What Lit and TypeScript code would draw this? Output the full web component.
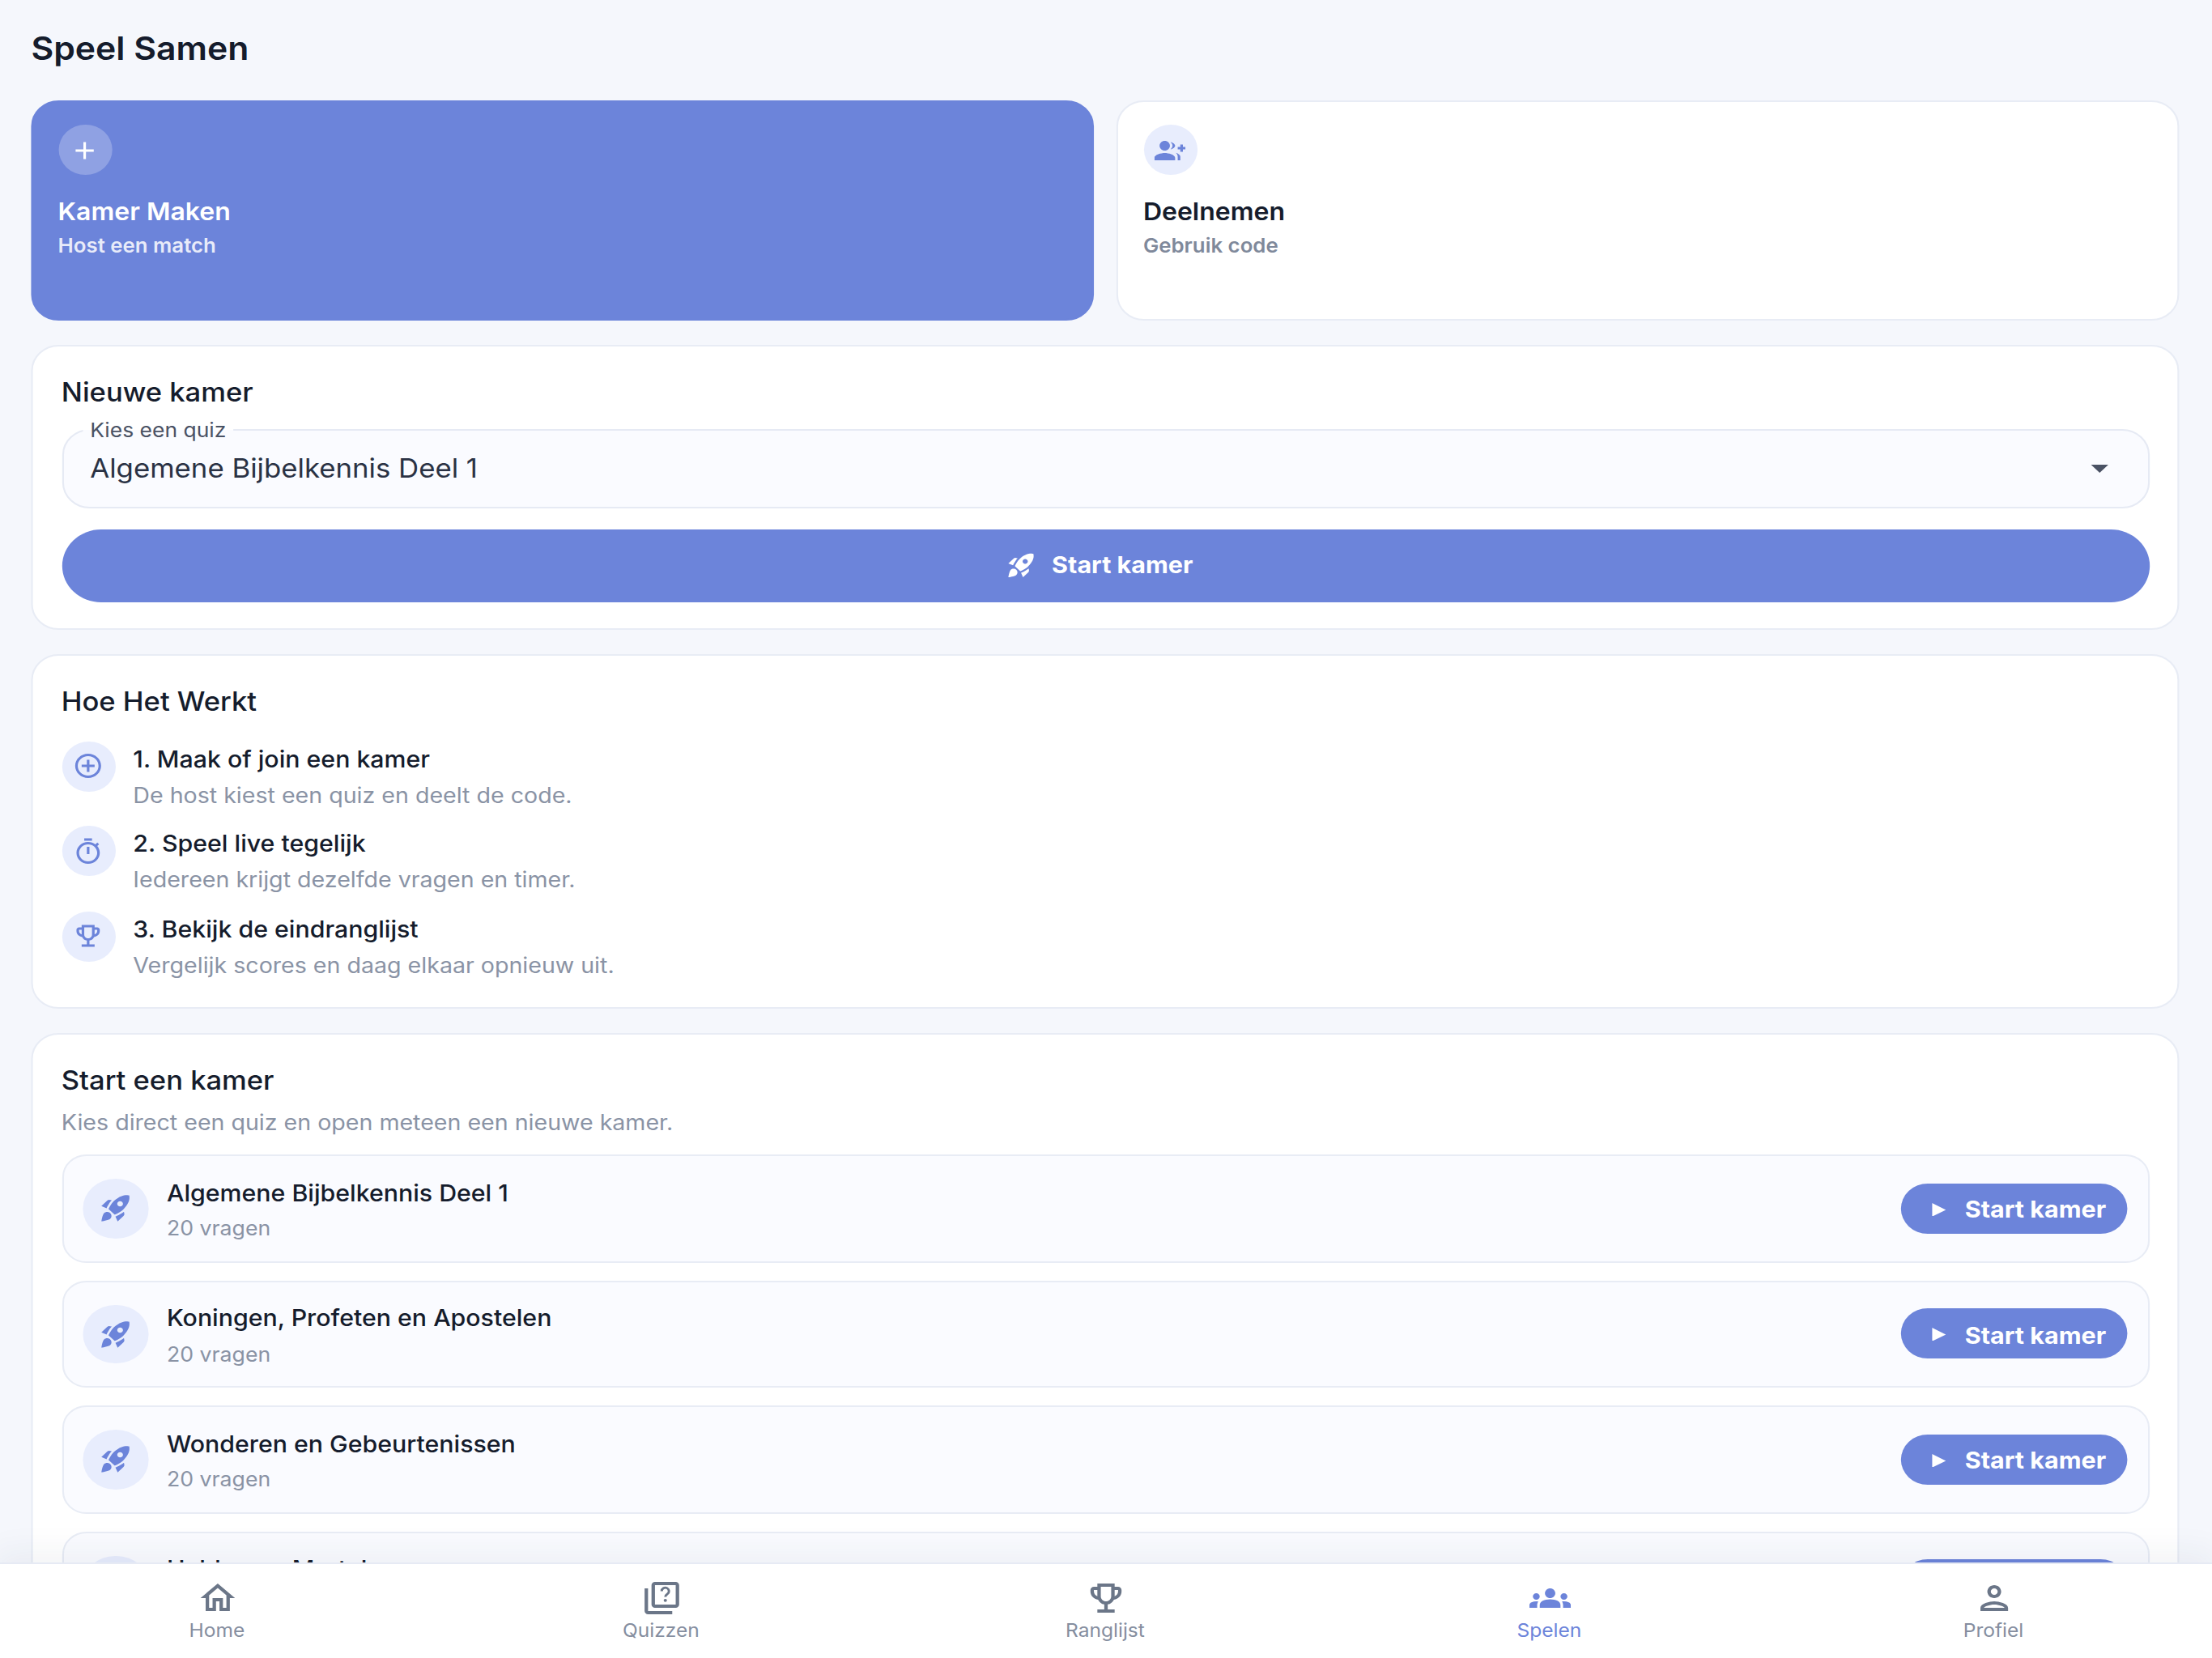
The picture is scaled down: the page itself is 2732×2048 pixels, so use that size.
import { LitElement, html, css, svg } from "lit";
import { customElement } from "lit/decorators.js";

const P = {
  add: "M19 13h-6v6h-2v-6H5v-2h6V5h2v6h6v2z",
  join: "M22 9V7h-2v2h-2v2h2v2h2v-2h2V9h-2zM8 12c2.21 0 4-1.79 4-4s-1.79-4-4-4-4 1.79-4 4 1.79 4 4 4zm0 2c-2.67 0-8 1.34-8 4v2h16v-2c0-2.66-5.33-4-8-4zm4.51-8.95C13.43 6.11 14 7 14 8s-.57 1.89-1.49 2.95C14.47 10.7 16 9.04 16 8s-1.53-2.7-3.49-2.95zM16.53 13.83c.89.83 1.47 1.87 1.47 3.17v3h2v-3c0-1.45-1.59-2.51-3.47-3.17z",
  rocket: "M9.19 6.35c-2.04 2.29-3.44 5.58-3.57 5.89L2 10.69l4.05-4.05c.47-.47 1.15-.68 1.81-.55l1.33.26zM11.17 17s3.74-1.55 5.89-3.7c5.4-5.4 4.5-9.62 4.21-10.57-.95-.3-5.17-1.19-10.57 4.21C8.55 9.09 7 12.83 7 12.83L11.17 17zm6.48-2.19c-2.29 2.04-5.58 3.44-5.89 3.57L13.31 22l4.05-4.05c.47-.47.68-1.15.55-1.81l-.26-1.33zM9 18c0 .83-.34 1.58-.88 2.12C6.94 21.3 2 22 2 22s.7-4.94 1.88-6.12C4.42 15.34 5.17 15 6 15c1.66 0 3 1.34 3 3zm4-9c0-1.1.9-2 2-2s2 .9 2 2-.9 2-2 2-2-.9-2-2z",
  addCircle: "M13 7h-2v4H7v2h4v4h2v-4h4v-2h-4V7zm-1-5C6.48 2 2 6.48 2 12s4.48 10 10 10 10-4.48 10-10S17.52 2 12 2zm0 18c-4.41 0-8-3.59-8-8s3.59-8 8-8 8 3.59 8 8-3.59 8-8 8z",
  timer: "M15 1H9v2h6V1zm-4 13h2V8h-2v6zm8.03-6.61l1.42-1.42c-.43-.51-.9-.99-1.41-1.41l-1.42 1.42C16.07 4.74 14.12 4 12 4c-4.97 0-9 4.03-9 9s4.02 9 9 9 9-4.03 9-9c0-2.12-.74-4.07-1.97-5.61zM12 20c-3.87 0-7-3.13-7-7s3.13-7 7-7 7 3.13 7 7-3.13 7-7 7z",
  trophy: "M19 5h-2V3H7v2H5c-1.1 0-2 .9-2 2v1c0 2.55 1.92 4.63 4.39 4.94.63 1.5 1.98 2.63 3.61 2.96V19H7v2h10v-2h-4v-3.1c1.63-.33 2.98-1.46 3.61-2.96C19.08 12.63 21 10.55 21 8V7c0-1.1-.9-2-2-2zM5 8V7h2v3.82C5.84 10.4 5 9.3 5 8zm7 6c-1.65 0-3-1.35-3-3V5h6v6c0 1.65-1.35 3-3 3zm7-6c0 1.3-.84 2.4-2 2.82V7h2v1z",
  home: "M12 5.69l5 4.5V18h-2v-6H9v6H7v-7.81l5-4.5M12 3L2 12h3v8h6v-6h2v6h6v-8h3L12 3z",
  quizBox: "M4 6H2v14c0 1.1.9 2 2 2h14v-2H4V6zm16-4H8c-1.1 0-2 .9-2 2v12c0 1.1.9 2 2 2h12c1.1 0 2-.9 2-2V4c0-1.1-.9-2-2-2zm0 14H8V4h12v12z",
  groups: "M12 12.75c1.63 0 3.07.39 4.24.9 1.08.48 1.76 1.56 1.76 2.73V18H6v-1.61c0-1.18.68-2.26 1.76-2.73 1.17-.52 2.61-.91 4.24-.91zM4 13c1.1 0 2-.9 2-2s-.9-2-2-2-2 .9-2 2 .9 2 2 2zm1.13 1.1c-.37-.06-.74-.1-1.13-.1-.99 0-1.93.21-2.78.58C.48 14.9 0 15.62 0 16.43V18h4.5v-1.61c0-.83.23-1.61.63-2.29zM20 13c1.1 0 2-.9 2-2s-.9-2-2-2-2 .9-2 2 .9 2 2 2zm4 3.43c0-.81-.48-1.53-1.22-1.85-.85-.37-1.79-.58-2.78-.58-.39 0-.76.04-1.13.1.4.68.63 1.46.63 2.29V18H24v-1.57zM12 6c1.66 0 3 1.34 3 3s-1.34 3-3 3-3-1.34-3-3 1.34-3 3-3z",
  person: "M12 6c1.1 0 2 .9 2 2s-.9 2-2 2-2-.9-2-2 .9-2 2-2m0 10c2.7 0 5.8 1.29 6 2H6c.23-.72 3.31-2 6-2m0-12C9.79 4 8 5.79 8 8s1.79 4 4 4 4-1.79 4-4-1.79-4-4-4zm0 10c-2.67 0-8 1.34-8 4v2h16v-2c0-2.66-5.33-4-8-4z",
};

const icon = (d: string, size: number) => html`<svg width=${size} height=${size} viewBox="0 0 24 24" fill="currentColor"><path d=${d}></path></svg>`;
const quizIcon = (size: number) => html`<svg width=${size} height=${size} viewBox="0 0 24 24" fill="currentColor">
  <path d=${P.quizBox}></path>
  ${svg`<path d="M11.9 7.7a2.1 2.1 0 1 1 3.3 1.7c-.8.6-1.2 1-1.2 1.9" fill="none" stroke="currentColor" stroke-width="1.4"></path><circle cx="14" cy="13.4" r=".95"></circle>`}
</svg>`;

const steps = [
  [P.addCircle, "1. Maak of join een kamer", "De host kiest een quiz en deelt de code."],
  [P.timer, "2. Speel live tegelijk", "Iedereen krijgt dezelfde vragen en timer."],
  [P.trophy, "3. Bekijk de eindranglijst", "Vergelijk scores en daag elkaar opnieuw uit."],
];
const rooms = ["Algemene Bijbelkennis Deel 1", "Koningen, Profeten en Apostelen", "Wonderen en Gebeurtenissen", "Helden en Martelaren"];

@customElement("app-root")
export class AppRoot extends LitElement {
  static styles = css`
    :host { display: block; width: 2732px; height: 2048px; overflow: hidden; background: #f5f7fc; }
    * { box-sizing: border-box; }
    .stage {
      width: 1280px; height: 1024px; transform: scale(2.134375, 2); transform-origin: 0 0;
      display: flex; flex-direction: column; overflow: hidden;
      font-family: Inter, "Liberation Sans", sans-serif; color: #151c2c; background: #f5f7fc;
    }
    main { flex: 1; min-height: 0; overflow: hidden; padding: 18px 19px 0 18px; }
    h1 { margin: 0 0 19.5px; font-size: 20px; line-height: 24px; font-weight: 600; }
    .actions { display: grid; grid-template-columns: 1fr 1fr; gap: 13px; margin-bottom: 15px; }
    .action {
      height: 136.5px; padding: 14.5px; border-radius: 16px; border: 1px solid #e8ecf5; background: #fff;
      display: flex; flex-direction: column;
    }
    .action.primary { background: #6c84da; border-color: #6c84da; color: #fff; }
    .dot { flex: none; border-radius: 50%; background: #e8edfd; color: #6c84da; display: flex; align-items: center; justify-content: center; }
    .dot.s31 { width: 31px; height: 31px; }
    .dot.s37 { width: 37.5px; height: 36.5px; }
    .primary .dot { background: rgba(255,255,255,.24); color: #fff; }
    .action-title { margin-top: 12.5px; font-size: 15px; line-height: 20px; font-weight: 600; }
    .action-sub { margin-top: 2px; font-size: 12.1px; line-height: 18px; font-weight: 600; color: #7f899b; }
    .primary .action-sub { color: rgba(255,255,255,.85); }
    .card { background: #fff; border: 1px solid #e8ecf5; border-radius: 16px; padding: 18px 16.5px 16px; margin-bottom: 15.5px; }
    .card.how { padding-bottom: 17px; }
    h2 { margin: 0; font-size: 16.2px; line-height: 20px; font-weight: 500; }
    .select {
      position: relative; margin-top: 12.5px; height: 49px; border: 1px solid #e6eaf4; border-radius: 16px; background: #fafbff;
      display: flex; align-items: center; justify-content: space-between; padding: 0 16px 0 15.6px;
      font-size: 16.3px; color: #2a3244;
    }
    .select label {
      position: absolute; left: 11.6px; top: -8px; padding: 0 4px; line-height: 15px; font-size: 12.4px; color: #4a5264; background: linear-gradient(#fff 50%, #fafbff 50%);
    }
    .select svg { color: #4a5264; }
    .go {
      margin-top: 13px; height: 45px; border-radius: 22.5px; background: #6c84da; color: #fff; padding: 0 7px 1px 0;
      display: flex; align-items: center; justify-content: center; gap: 9px; font-size: 14.3px; font-weight: 700;
    }
    .steps { margin-top: 14.5px; display: flex; flex-direction: column; gap: 10.5px; }
    .step { display: flex; gap: 10.5px; }
    .t { font-size: 14.2px; line-height: 21px; font-weight: 500; }
    .s { margin-top: 3px; font-size: 13.4px; line-height: 18px; color: #8a93a5; }
    .intro { margin-top: 7px; font-size: 13.4px; line-height: 18px; color: #8a93a5; }
    .rooms { margin-top: 11px; display: flex; flex-direction: column; gap: 11px; }
    .room {
      height: 66.5px; flex: none; border: 1px solid #e8ecf5; border-radius: 14px; background: #fafbff; padding: 0 7px 0 11.5px;
      display: flex; align-items: center; gap: 6px;
    }
    .room .info { flex: 1; min-width: 0; margin-left: 5px; margin-top: 2.5px; }
    .room .t { line-height: 20px; }
    .room .s { margin-top: 3.4px; font-size: 12.5px; }
    .start {
      flex: none; height: 31px; width: 131px; border-radius: 15.5px; background: #6c84da; color: #fff; padding: 1px 0 0 18px;
      display: flex; align-items: center; gap: 11px; font-size: 14.3px; font-weight: 700; margin-right: 4.5px;
    }
    nav {
      flex: none; height: 59px; width: 1285px; margin-left: -3px; background: #fff; border-top: 1px solid #e6eaf4;
      box-shadow: 0 -6px 20px rgba(40,50,80,.06); position: relative;
      display: grid; grid-template-columns: repeat(5, 1fr);
    }
    .tab { display: flex; flex-direction: column; align-items: center; padding-top: 8.5px; color: #6b7688; }
    .tab span { margin-top: 1.3px; font-size: 11.5px; line-height: 14px; color: #858e9f; }
    .tab.on, .tab.on span { color: #6c84da; }
  `;

  render() {
    const tabs: [any, string][] = [
      [icon(P.home, 24), "Home"], [quizIcon(24), "Quizzen"], [icon(P.trophy, 24), "Ranglijst"], [icon(P.groups, 24), "Spelen"], [icon(P.person, 24), "Profiel"],
    ];
    return html`<div class="stage">
      <main>
        <h1>Speel Samen</h1>
        <div class="actions">
          <div class="action primary">
            <div class="dot s31">${icon(P.add, 18)}</div>
            <div class="action-title">Kamer Maken</div>
            <div class="action-sub">Host een match</div>
          </div>
          <div class="action">
            <div class="dot s31">${icon(P.join, 18)}</div>
            <div class="action-title">Deelnemen</div>
            <div class="action-sub">Gebruik code</div>
          </div>
        </div>
        <section class="card">
          <h2>Nieuwe kamer</h2>
          <div class="select">
            <label>Kies een quiz</label>
            <span class="value">Algemene Bijbelkennis Deel 1</span>
            <svg width="24" height="24" viewBox="0 0 24 24" fill="currentColor"><path d="M7 10l5 5 5-5z"></path></svg>
          </div>
          <div class="go">${icon(P.rocket, 18)}<span>Start kamer</span></div>
        </section>
        <section class="card how">
          <h2>Hoe Het Werkt</h2>
          <div class="steps">
            ${steps.map(([d, t, s]) => html`<div class="step">
              <div class="dot s31">${icon(d, 18)}</div>
              <div><div class="t">${t}</div><div class="s">${s}</div></div>
            </div>`)}
          </div>
        </section>
        <section class="card">
          <h2>Start een kamer</h2>
          <div class="intro">Kies direct een quiz en open meteen een nieuwe kamer.</div>
          <div class="rooms">
            ${rooms.map((r) => html`<div class="room">
              <div class="dot s37">${icon(P.rocket, 20)}</div>
              <div class="info"><div class="t">${r}</div><div class="s">20 vragen</div></div>
              <div class="start"><svg width="8" height="8.4" viewBox="0 0 8 8.4" fill="currentColor"><path d="M0 0 8 4.2 0 8.4z"></path></svg><span>Start kamer</span></div>
            </div>`)}
          </div>
        </section>
      </main>
      <nav>
        ${tabs.map(([ic, l], i) => html`<div class="tab ${i === 3 ? "on" : ""}">${ic}<span>${l}</span></div>`)}
      </nav>
    </div>`;
  }
}
